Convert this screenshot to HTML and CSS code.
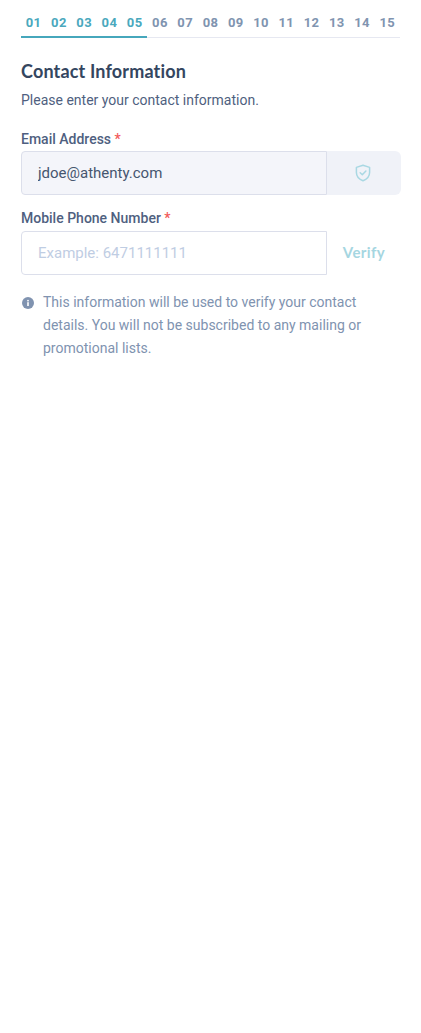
FILE: index.html
```html
<!DOCTYPE html>
<html lang="en">
<head>
    <meta charset="UTF-8">
    <meta name="viewport" content="width=device-width, initial-scale=1.0">
    <title>Contact Information</title>
    <link rel="stylesheet" href="styles.css">
</head>
<body>

    <div class="steps">
        <span class="step done">01</span>
        <span class="step done">02</span>
        <span class="step done">03</span>
        <span class="step done">04</span>
        <span class="step done">05</span>
        <span class="step">06</span>
        <span class="step">07</span>
        <span class="step">08</span>
        <span class="step">09</span>
        <span class="step">10</span>
        <span class="step">11</span>
        <span class="step">12</span>
        <span class="step">13</span>
        <span class="step">14</span>
        <span class="step">15</span>
    </div>

    <h2 class="title">Contact Information</h2>
    <p class="subtitle">Please enter your contact information.</p>

    <label class="field-label" for="email">Email Address <span class="req">*</span></label>
    <div class="field-row">
        <input class="field-input locked" type="text" id="email" value="jdoe@athenty.com" readonly>
        <div class="addon locked-addon">
            <svg class="shield" width="16" height="18" viewBox="0 0 16 18" fill="none" stroke="#a9d8e3" stroke-width="1.5" stroke-linecap="round" stroke-linejoin="round">
                <path d="M8 1.2 L14.6 3.4 V8.6 C14.6 12.6 11.6 15.4 8 16.8 C4.4 15.4 1.4 12.6 1.4 8.6 V3.4 Z"/>
                <path d="M5.2 8.8 L7.3 10.8 L10.9 7"/>
            </svg>
        </div>
    </div>

    <label class="field-label second" for="phone">Mobile Phone Number <span class="req">*</span></label>
    <div class="field-row phone-row">
        <input class="field-input" type="text" id="phone" placeholder="Example: 6471111111">
        <div class="addon verify">Verify</div>
    </div>

    <div class="note">
        <svg class="note-icon" width="12" height="12" viewBox="0 0 12 12">
            <circle cx="6" cy="6" r="6" fill="#8093b0"/>
            <rect x="5.2" y="5.2" width="1.6" height="3.8" fill="#fff"/>
            <rect x="5.2" y="2.9" width="1.6" height="1.5" fill="#fff"/>
        </svg>
        <p>This information will be used to verify your contact details. You will not be subscribed to any mailing or promotional lists.</p>
    </div>

</body>
</html>
```

FILE: styles.css
```css
body {
    font-family: 'Roboto', sans-serif;
    background: #fff;
    color: #4f5f80;
    margin: 0;
    padding: 0 21px;
}

.steps {
    display: flex;
    height: 38px;
    box-sizing: border-box;
    border-bottom: 1px solid #e6e8f1;
}

.step {
    flex: 1;
    text-align: center;
    font-size: 13px;
    font-weight: 700;
    letter-spacing: 0.4px;
    line-height: 45px;
    height: 38px;
    box-sizing: border-box;
    color: #8094b0;
}

.step.done {
    color: #4aa8bd;
    border-bottom: 2px solid #46a7bc;
}

.title {
    font-family: 'Lato', sans-serif;
    font-size: 18px;
    font-weight: 700;
    letter-spacing: 0.16px;
    line-height: 24px;
    color: #34465f;
    margin: 21px 0 0;
}

.subtitle {
    font-size: 14px;
    line-height: 20px;
    margin: 7px 0 0;
}

.field-label {
    display: block;
    font-size: 14px;
    font-weight: 500;
    line-height: 20px;
    margin-top: 19px;
}

.field-label.second {
    margin-top: 13px;
}

.req {
    color: #f25a5a;
}

.field-row {
    display: flex;
    width: 380px;
    height: 44px;
    margin-top: 2px;
}

.phone-row {
    margin-top: 3px;
}

.field-input {
    width: 306px;
    height: 44px;
    box-sizing: border-box;
    border: 1px solid #dcdfeb;
    border-radius: 4px 0 0 4px;
    padding: 0 16px;
    font-family: 'Roboto', sans-serif;
    font-size: 15px;
    color: #46566f;
    outline: none;
    background: #fff;
}

.field-input::placeholder {
    color: #bfcde3;
    opacity: 1;
}

.field-input.locked {
    background: #f4f5fa;
}

.addon {
    flex: 1;
    display: flex;
    align-items: center;
    justify-content: center;
}

.locked-addon {
    background: #f0f2f8;
    border-radius: 0 6px 6px 0;
    padding-right: 2px;
}

.verify {
    font-family: 'Lato', sans-serif;
    font-size: 15px;
    font-weight: 700;
    letter-spacing: 0.4px;
    color: #a5d6e1;
    padding-bottom: 2px;
    box-sizing: border-box;
}

.note {
    display: flex;
    margin-top: 16px;
    width: 345px;
}

.note-icon {
    flex: none;
    margin: 6px 9px 0 1px;
}

.note p {
    margin: 0;
    font-size: 14px;
    line-height: 23px;
    color: #8093b0;
}
```
